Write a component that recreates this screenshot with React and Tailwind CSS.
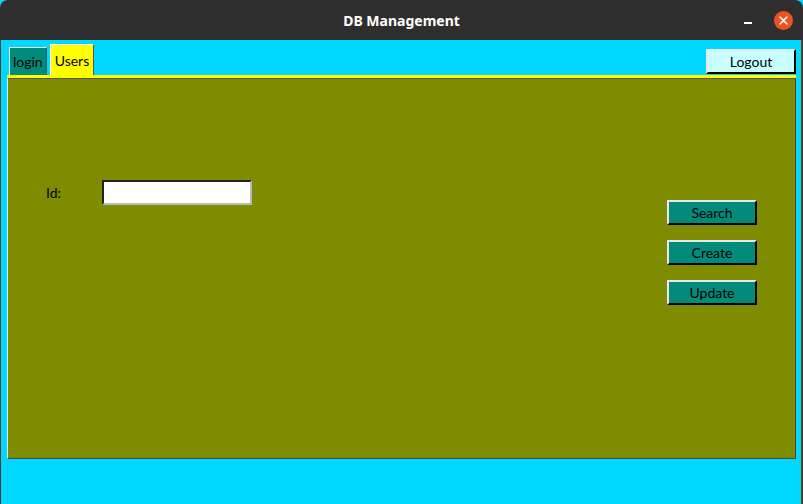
export default function App() {
  const btn =
    "w-[90px] h-[25px] bg-[#008b7a] border-t-2 border-l-2 border-t-[#e8e8e8] border-l-[#e8e8e8] border-b-2 border-r-2 border-b-black border-r-black flex items-center justify-center text-[14px] text-black";
  return (
    <div
      className="w-[803px] h-[504px] bg-[#00d8ff] flex flex-col overflow-hidden"
      style={{ fontFamily: "Lato, 'Noto Sans', sans-serif" }}
    >
      <div className="h-[40px] bg-[#2f2e2e] rounded-t-[8px] flex items-center relative shrink-0">
        <div className="flex-1 text-center text-white font-bold text-[14px]" style={{ fontFamily: "'Noto Sans', Lato, sans-serif" }}>
          DB Management
        </div>
        <div className="absolute left-[744px] top-[22px] w-[8px] h-[1.5px] bg-white" />
        <div className="absolute left-[774px] top-[11px] w-[19px] h-[19px] rounded-full bg-[#e95420] flex items-center justify-center">
          <svg width="9" height="9" viewBox="0 0 9 9">
            <path d="M1 1L8 8M8 1L1 8" stroke="white" strokeWidth="1.5" strokeLinecap="round" />
          </svg>
        </div>
      </div>
      <div className="flex-1 border-l border-l-[#5a3a2a] border-r-2 border-r-[#5a3a2a] flex flex-col">
        <div className="flex items-end justify-between h-[35px] pl-[7px] pr-[5px]">
          <div className="flex items-end gap-[3px] pl-[1px]">
            <div className="h-[28px] px-[3px] bg-[#008b7a] border-t border-l border-t-white border-l-white border-r border-r-[#555] flex items-center text-[14px] text-black">
              login
            </div>
            <div className="h-[31px] px-[4px] bg-[#ffff00] border-t border-l border-t-white border-l-white border-r border-r-[#555] flex items-center text-[14px] text-black">
              Users
            </div>
          </div>
          <div className="w-[90px] h-[25px] mb-[1px] bg-[#c8ffff] border-t-2 border-l-2 border-t-[#e8e8e8] border-l-[#e8e8e8] border-b-2 border-r-2 border-b-black border-r-black flex items-center justify-center text-[14px] text-black">
            Logout
          </div>
        </div>
        <div className="mx-[6px] mr-[5px] h-[3px] bg-[#ffff00]" />
        <div className="mx-[6px] mr-[5px] h-[381px] bg-[#808c00] border-l border-l-white border-b border-b-[#444] border-r border-r-[#444] border-t border-t-[#555] flex">
          <div className="flex-1 pt-[101px] pl-[38px]">
            <div className="flex items-center">
              <span className="text-[14px] text-black w-[56px]">Id:</span>
              <div className="w-[150px] h-[25px] bg-white border-t-2 border-l-2 border-t-[#222] border-l-[#222] border-b-2 border-r-2 border-b-[#bbb] border-r-[#bbb]" />
            </div>
          </div>
          <div className="flex flex-col gap-[15px] pt-[121px] pr-[38px]">
            <div className={btn}>Search</div>
            <div className={btn}>Create</div>
            <div className={btn}>Update</div>
          </div>
        </div>
      </div>
    </div>
  );
}
